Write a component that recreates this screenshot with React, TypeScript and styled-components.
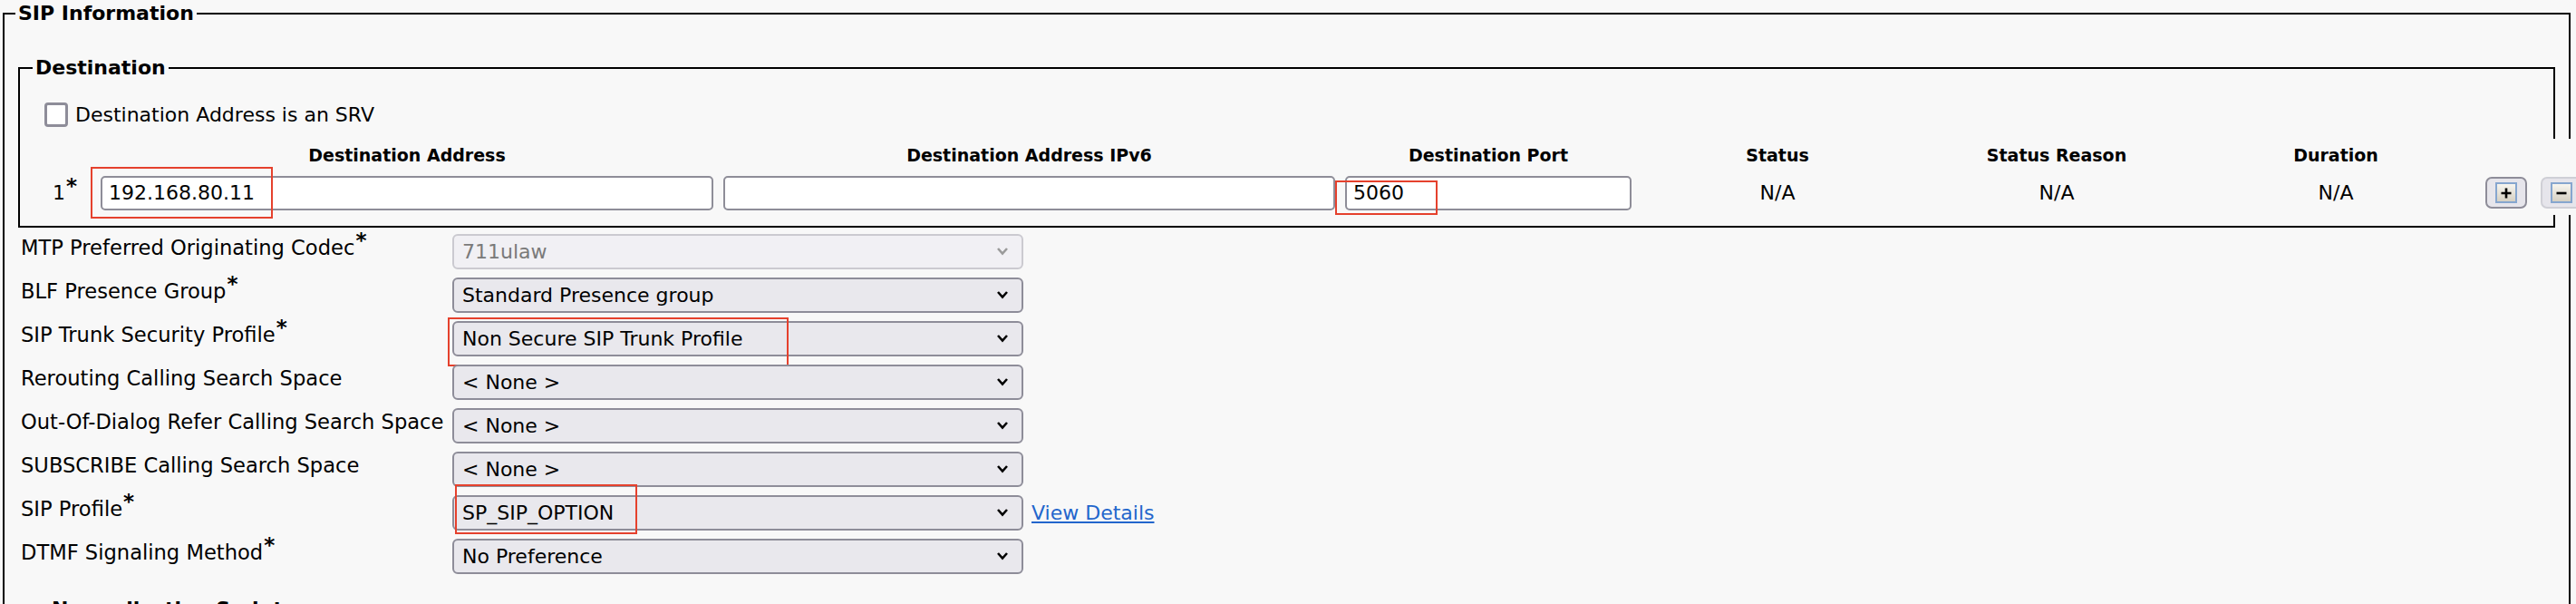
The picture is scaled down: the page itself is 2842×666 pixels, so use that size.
import React from "react";
import styled, { createGlobalStyle } from "styled-components";

const GlobalStyle = createGlobalStyle`
  html, body { margin: 0; padding: 0; background: #f8f8f8; overflow: hidden; }
  body { font-family: "DejaVu Sans", Verdana, sans-serif; font-size: 22px; color: #000; }
  #root { width: 2842px; height: 666px; overflow: hidden; }
`;

const Page = styled.div`
  width: 2842px;
  box-sizing: border-box;
  padding: 2px 0 0 3px;
`;

const Fieldset = styled.fieldset<{ $outer?: boolean }>`
  min-inline-size: 0;
  margin: ${(p) => (p.$outer ? "0 6px 0 0" : "34px 0 0 0")};
  padding: ${(p) => (p.$outer ? "0 15px 40px 15px" : "0 14px 12px 14px")};
  border: 2px solid #000;
`;

const Legend = styled.legend<{ $shift?: number }>`
  font-weight: bold;
  font-size: 22px;
  line-height: 26px;
  padding: 0 3px;
  margin-left: ${(p) => p.$shift ?? 0}px;
`;

const CheckRow = styled.label`
  display: flex;
  align-items: center;
  gap: 8px;
  margin: 25px 0 0 13px;
  height: 27px;
  font-size: 22px;
`;

const CheckBox = styled.span`
  width: 26px;
  height: 27px;
  box-sizing: border-box;
  border: 3px solid #8e8d99;
  border-radius: 4px;
  background: #fff;
`;

const DestTable = styled.div`
  width: 2832px;
  margin-top: 13px;
  background: #f8f8f8;
  display: grid;
  grid-template-columns: 64px 676px 675px 316px 300px 294px 300px 130px;
  grid-template-rows: 35px 49px;
  column-gap: 11px;
  align-items: center;
`;

const HeadCell = styled.div`
  font-size: 19px;
  font-weight: bold;
  text-align: center;
  line-height: 22px;
`;

const IndexCell = styled.div`
  padding-left: 22px;
  font-size: 22px;
`;

const Req = styled.sup`
  font-size: 23px;
  font-weight: bold;
  line-height: 0;
  margin-left: 1px;
  position: relative;
  top: 1px;
`;

const Field = styled.div`
  position: relative;
  display: flex;
  align-items: center;
`;

const TextInput = styled.input`
  width: 100%;
  height: 38px;
  box-sizing: border-box;
  border: 2px solid #8e8d98;
  border-radius: 5px;
  background: #fff;
  padding: 0 7px;
  font-family: "DejaVu Sans", Verdana, sans-serif;
  font-size: 22px;
  color: #000;
  outline: none;
`;

const Mark = styled.span<{ $l: number; $t: number; $w: number; $h: number }>`
  position: absolute;
  left: ${(p) => p.$l}px;
  top: ${(p) => p.$t}px;
  width: ${(p) => p.$w}px;
  height: ${(p) => p.$h}px;
  box-sizing: border-box;
  border: 2px solid #e5412d;
  pointer-events: none;
`;

const ValueCell = styled.div`
  text-align: center;
  font-size: 22px;
`;

const ButtonCell = styled.div`
  display: flex;
  gap: 15px;
  padding-left: 4px;
`;

const RowButton = styled.button<{ $dim?: boolean }>`
  width: 46px;
  height: 35px;
  flex: none;
  box-sizing: border-box;
  border: 2px solid ${(p) => (p.$dim ? "#cfcfd6" : "#8e8d99")};
  border-radius: 7px;
  background: #e6e5eb;
  padding: 0;
  display: flex;
  align-items: center;
  justify-content: center;
`;

const ButtonIcon = styled.span`
  width: 24px;
  height: 23px;
  box-sizing: border-box;
  border: 2px solid #86a6cf;
  background: linear-gradient(#f7f5ef, #d5d0c3);
  display: flex;
  align-items: center;
  justify-content: center;
`;

const FormGrid = styled.div`
  display: grid;
  grid-template-columns: 476px 630px 1fr;
  grid-auto-rows: 48px;
  align-items: center;
  margin: 2px 0 0 3px;
`;

const Label = styled.div`
  font-size: 22.6px;
  line-height: 26px;
  padding-bottom: 8px;
  white-space: nowrap;
`;

const SelectBox = styled.div<{ $disabled?: boolean }>`
  position: relative;
  height: 39px;
  box-sizing: border-box;
  border: 2px solid ${(p) => (p.$disabled ? "#cbcad0" : "#8e8d99")};
  border-radius: 6px;
  background: ${(p) => (p.$disabled ? "#f1f0f4" : "#e9e8ed")};
  color: ${(p) => (p.$disabled ? "#7a7a7a" : "#000")};
  display: flex;
  align-items: center;
  justify-content: space-between;
  padding: 0 14px 0 9px;
  font-size: 22px;
`;

const LinkCell = styled.div`
  padding-left: 9px;
`;

const Link = styled.a`
  color: #2366cc;
  text-decoration: underline;
  font-size: 22px;
  cursor: pointer;
`;

const Chevron = ({ color }: { color: string }) => (
  <svg width="14" height="10" viewBox="0 0 14 10">
    <polyline points="2,2 7,7.5 12,2" fill="none" stroke={color} strokeWidth="2.6" />
  </svg>
);

const NextFieldset = styled(Fieldset)`
  margin-top: 22px;
  height: 60px;
`;

type Row = {
  label: string;
  req?: boolean;
  value: string;
  disabled?: boolean;
  mark?: { l: number; t: number; w: number; h: number };
  link?: string;
};

const rows: Row[] = [
  { label: "MTP Preferred Originating Codec", req: true, value: "711ulaw", disabled: true },
  { label: "BLF Presence Group", req: true, value: "Standard Presence group" },
  {
    label: "SIP Trunk Security Profile",
    req: true,
    value: "Non Secure SIP Trunk Profile",
    mark: { l: -7, t: -6, w: 376, h: 54 },
  },
  { label: "Rerouting Calling Search Space", value: "< None >" },
  { label: "Out-Of-Dialog Refer Calling Search Space", value: "< None >" },
  { label: "SUBSCRIBE Calling Search Space", value: "< None >" },
  {
    label: "SIP Profile",
    req: true,
    value: "SP_SIP_OPTION",
    mark: { l: 1, t: -14, w: 201, h: 55 },
    link: "View Details",
  },
  { label: "DTMF Signaling Method", req: true, value: "No Preference" },
];

export default function App() {
  return (
    <>
      <GlobalStyle />
      <Page>
        <Fieldset $outer>
          <Legend $shift={-3}>SIP Information</Legend>
          <Fieldset>
            <Legend>Destination</Legend>
            <CheckRow>
              <CheckBox />
              Destination Address is an SRV
            </CheckRow>
            <DestTable>
              <div />
              <HeadCell>Destination Address</HeadCell>
              <HeadCell>Destination Address IPv6</HeadCell>
              <HeadCell>Destination Port</HeadCell>
              <HeadCell>Status</HeadCell>
              <HeadCell>Status Reason</HeadCell>
              <HeadCell>Duration</HeadCell>
              <div />

              <IndexCell>
                1<Req>*</Req>
              </IndexCell>
              <Field>
                <TextInput defaultValue="192.168.80.11" />
                <Mark $l={-11} $t={-10} $w={201} $h={57} />
              </Field>
              <Field>
                <TextInput defaultValue="" />
              </Field>
              <Field>
                <TextInput defaultValue="5060" />
                <Mark $l={-11} $t={5} $w={113} $h={38} />
              </Field>
              <ValueCell>N/A</ValueCell>
              <ValueCell>N/A</ValueCell>
              <ValueCell>N/A</ValueCell>
              <ButtonCell>
                <RowButton aria-label="add">
                  <ButtonIcon>
                    <svg width="14" height="14" viewBox="0 0 14 14">
                      <path d="M7 1.5v11M1.5 7h11" stroke="#000" strokeWidth="2.6" />
                    </svg>
                  </ButtonIcon>
                </RowButton>
                <RowButton $dim aria-label="remove">
                  <ButtonIcon>
                    <svg width="14" height="14" viewBox="0 0 14 14">
                      <path d="M1.5 7h11" stroke="#000" strokeWidth="2.6" />
                    </svg>
                  </ButtonIcon>
                </RowButton>
              </ButtonCell>
            </DestTable>
          </Fieldset>

          <FormGrid>
            {rows.map((r) => (
              <React.Fragment key={r.label}>
                <Label>
                  {r.label}
                  {r.req && <Req>*</Req>}
                </Label>
                <SelectBox $disabled={r.disabled}>
                  <span>{r.value}</span>
                  <Chevron color={r.disabled ? "#9a9a9a" : "#000"} />
                  {r.mark && <Mark $l={r.mark.l} $t={r.mark.t} $w={r.mark.w} $h={r.mark.h} />}
                </SelectBox>
                <LinkCell>{r.link && <Link>{r.link}</Link>}</LinkCell>
              </React.Fragment>
            ))}
          </FormGrid>

          <NextFieldset>
            <Legend $shift={18}>Normalization Script</Legend>
          </NextFieldset>
        </Fieldset>
      </Page>
    </>
  );
}
